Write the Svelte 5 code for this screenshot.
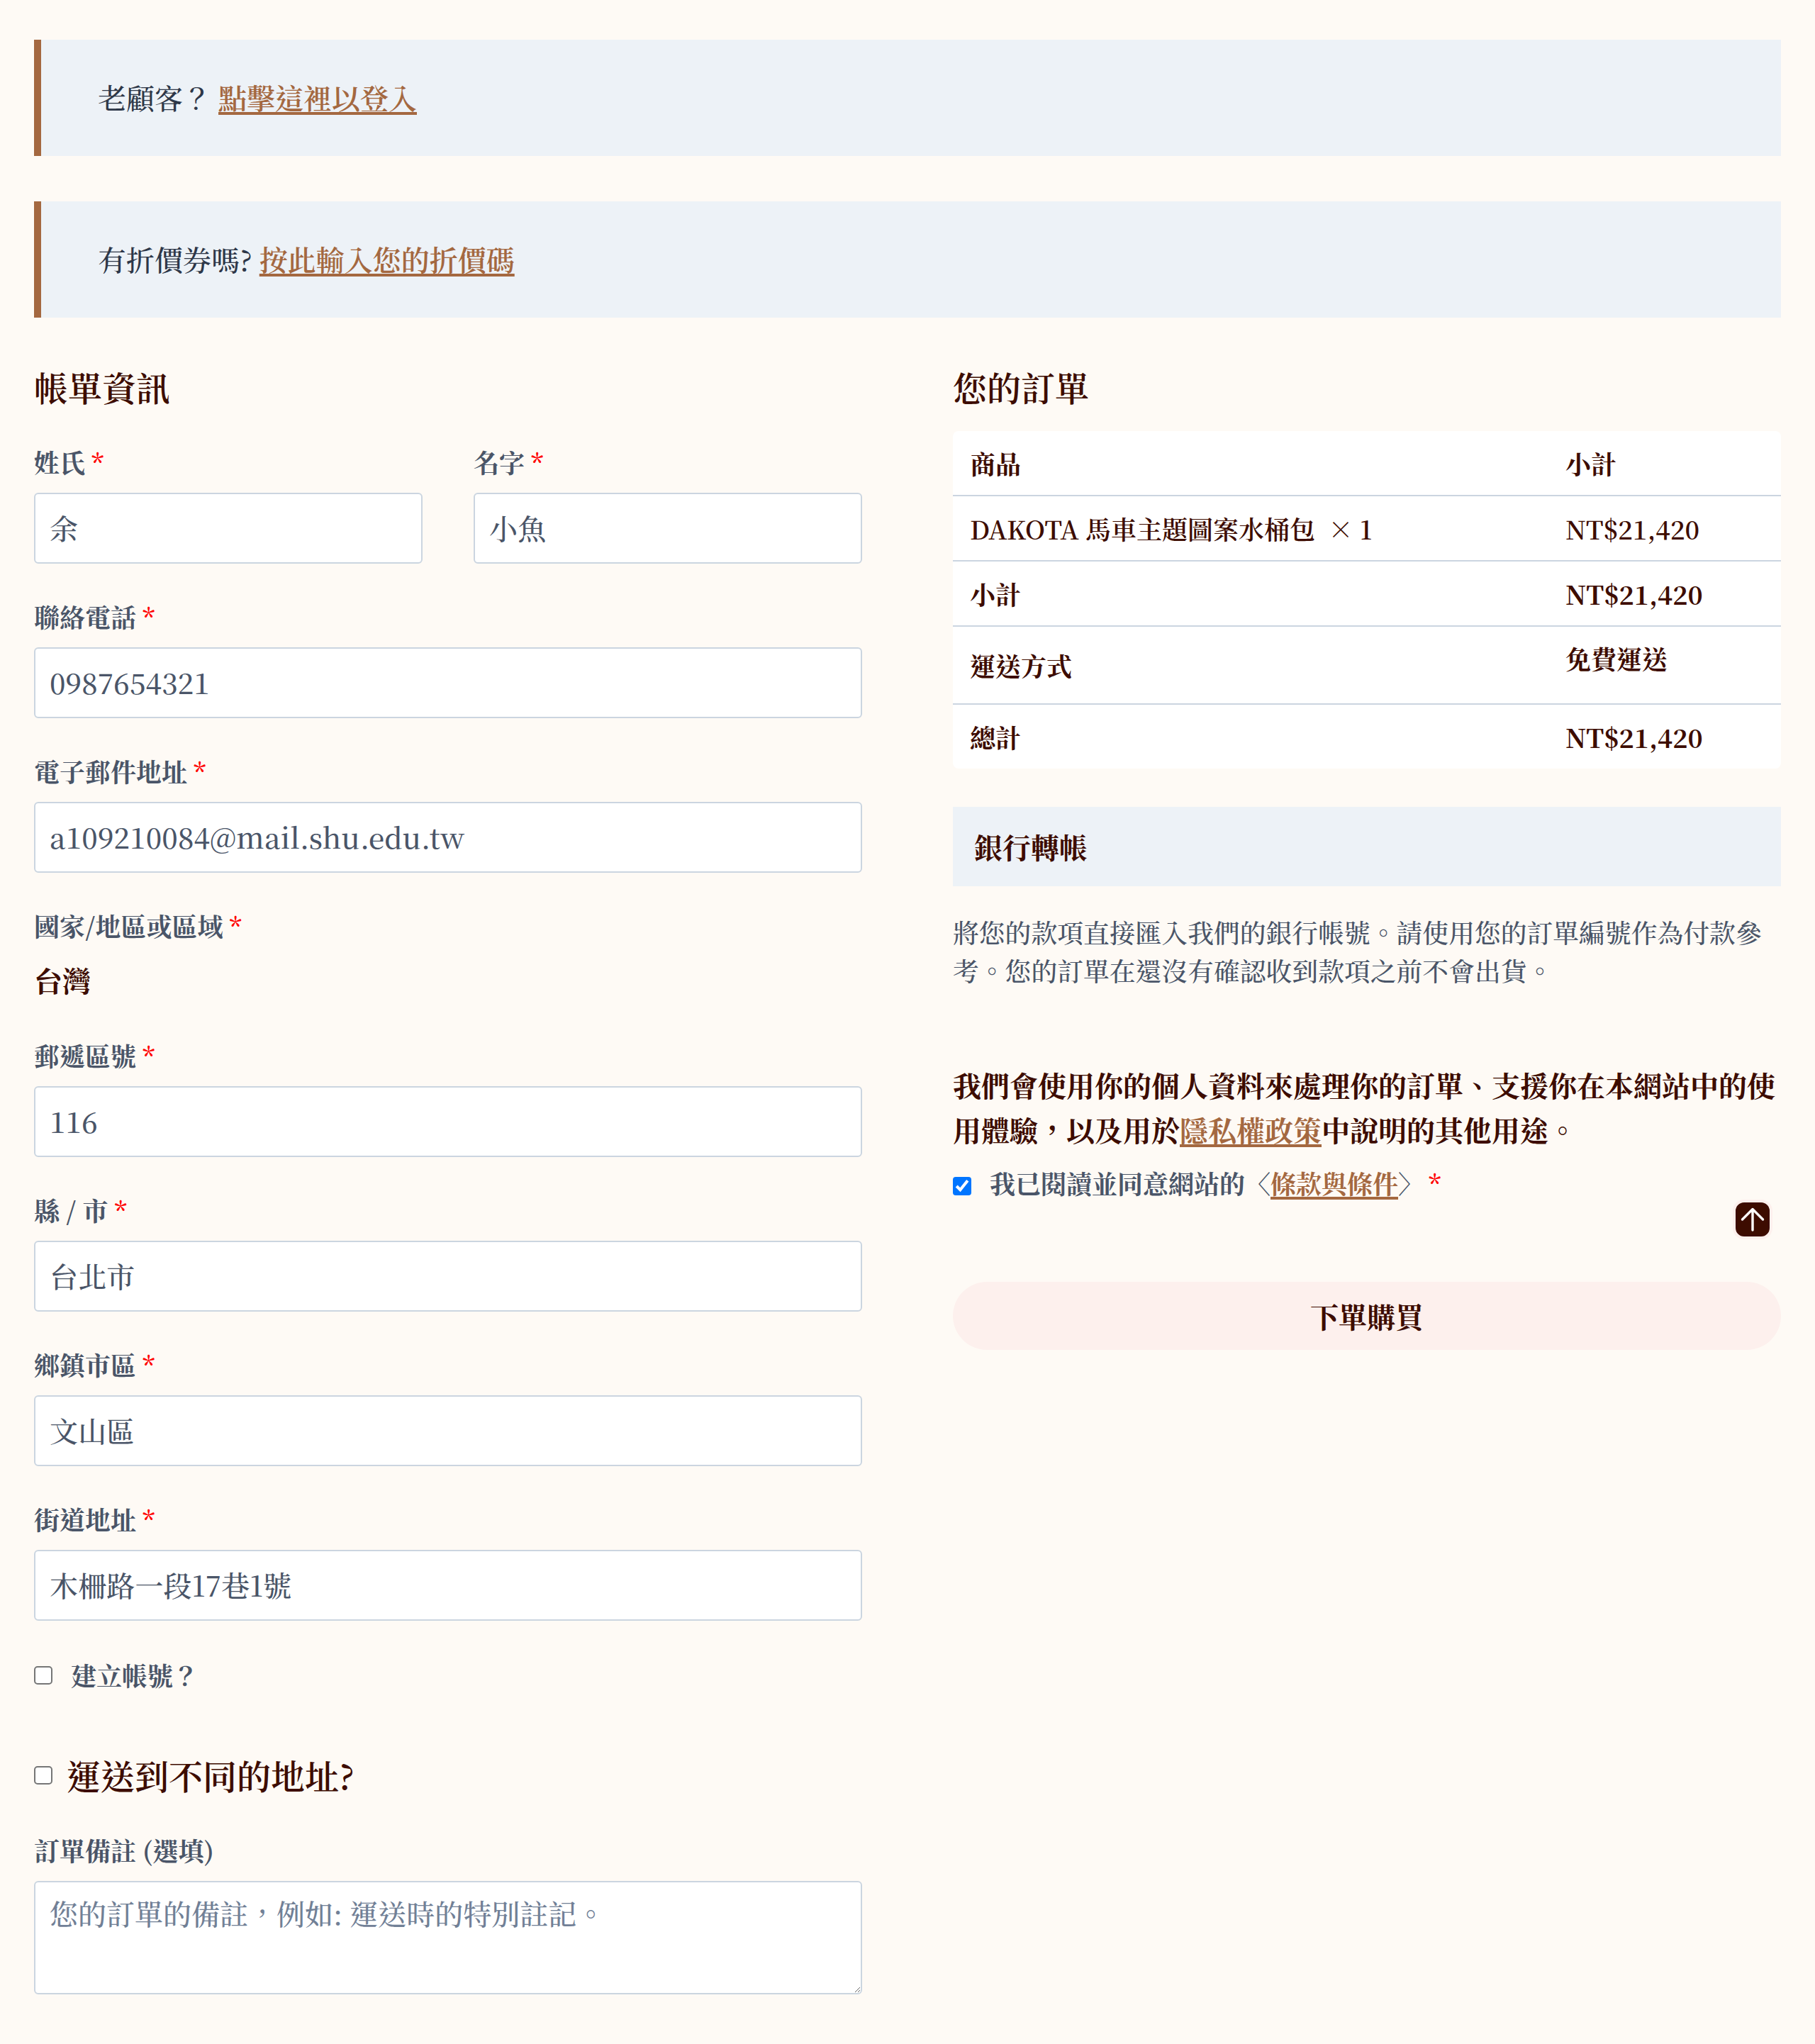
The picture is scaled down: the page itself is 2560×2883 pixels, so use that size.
<script>
    const fields = [
        {label: "聯絡電話", value: "0987654321"},
        {label: "電子郵件地址", value: "a109210084@mail.shu.edu.tw"},
    ];
    const addressFields = [
        {label: "郵遞區號", value: "116"},
        {label: "縣 / 市", value: "台北市"},
        {label: "鄉鎮市區", value: "文山區"},
        {label: "街道地址", value: "木柵路一段17巷1號"},
    ];
</script>

<div class="page">
    <div class="notice">老顧客？ <a href="#login">點擊這裡以登入</a></div>
    <div class="notice">有折價券嗎? <a href="#coupon">按此輸入您的折價碼</a></div>

    <div class="columns">
        <section class="billing">
            <h3>帳單資訊</h3>
            <div class="name-row">
                <div class="field">
                    <label for="last">姓氏 <abbr>*</abbr></label>
                    <input id="last" value="余" />
                </div>
                <div class="field">
                    <label for="first">名字 <abbr>*</abbr></label>
                    <input id="first" value="小魚" />
                </div>
            </div>
            {#each fields as f}
                <div class="field">
                    <label for={f.label}>{f.label} <abbr>*</abbr></label>
                    <input id={f.label} value={f.value} />
                </div>
            {/each}
            <div class="field country">
                <label for="country">國家/地區或區域 <abbr>*</abbr></label>
                <strong id="country">台灣</strong>
            </div>
            {#each addressFields as f}
                <div class="field">
                    <label for={f.label}>{f.label} <abbr>*</abbr></label>
                    <input id={f.label} value={f.value} />
                </div>
            {/each}
            <label class="check create"><input type="checkbox" /> <span>建立帳號？</span></label>
            <label class="check ship"><input type="checkbox" /> <span>運送到不同的地址?</span></label>
            <div class="field notes">
                <label for="notes">訂單備註 (選填)</label>
                <textarea id="notes" placeholder="您的訂單的備註，例如: 運送時的特別註記。"></textarea>
            </div>
        </section>

        <section class="order">
            <h3>您的訂單</h3>
            <table>
                <thead>
                    <tr><th>商品</th><th>小計</th></tr>
                </thead>
                <tbody>
                    <tr><td>DAKOTA 馬車主題圖案水桶包 &nbsp;× 1</td><td>NT$21,420</td></tr>
                </tbody>
                <tfoot>
                    <tr><th>小計</th><th>NT$21,420</th></tr>
                    <tr class="shipping"><th>運送方式</th><th class="free">免費運送</th></tr>
                    <tr><th>總計</th><th>NT$21,420</th></tr>
                </tfoot>
            </table>

            <div class="bank">銀行轉帳</div>
            <p class="bank-desc">將您的款項直接匯入我們的銀行帳號。請使用您的訂單編號作為付款參考。您的訂單在還沒有確認收到款項之前不會出貨。</p>
            <p class="privacy">我們會使用你的個人資料來處理你的訂單、支援你在本網站中的使用體驗，以及用於<a href="#privacy">隱私權政策</a>中說明的其他用途。</p>
            <label class="check terms">
                <input type="checkbox" checked />
                <span>我已閱讀並同意網站的〈<a href="#terms">條款與條件</a>〉</span>
                <abbr>*</abbr>
            </label>
            <button class="submit">下單購買</button>
        </section>
    </div>

    <button class="to-top" aria-label="回到頂端">
        <svg viewBox="0 0 48 48" width="48" height="48" fill="none" stroke="#fff" stroke-width="3.4" stroke-linecap="round" stroke-linejoin="round">
            <path d="M24 39V9.500M9.500 24 24 9.500 38.500 24" />
        </svg>
    </button>
</div>

<style>
    :global(body) {
        margin: 0;
        background: #fefaf5;
    }

    .page {
        position: relative;
        box-sizing: border-box;
        height: 2883px;
        padding: 56px 48px 0;
        font-family: "Noto Serif CJK TC", "Liberation Serif", "Noto Sans CJK TC", serif;
        font-weight: 500;
        color: #3d0c00;
    }

    a {
        color: #a46840;
        text-decoration: underline 4px;
        text-decoration-skip-ink: none;
        text-underline-offset: 4px;
        font-weight: 600;
    }

    .notice {
        box-sizing: border-box;
        height: 164px;
        margin-bottom: 64px;
        padding-left: 80px;
        padding-bottom: 3px;
        display: flex;
        align-items: center;
        gap: 10px;
        font-size: 40px;
        color: #2d3748;
        background: #edf2f7;
        border-left: 10px solid #a46840;
    }

    .columns {
        display: grid;
        grid-template-columns: 1168px 1168px;
        column-gap: 128px;
        margin-top: -2px;
    }

    h3 {
        margin: 0;
        font-size: 48px;
        line-height: 72px;
        font-weight: 600;
    }

    .billing h3 {
        margin-bottom: 43px;
    }

    .order h3 {
        margin-bottom: 26px;
    }

    .name-row {
        display: grid;
        grid-template-columns: 548px 548px;
        column-gap: 72px;
    }

    .field {
        margin-bottom: 48px;
    }

    .field label {
        display: block;
        height: 54px;
        margin-bottom: 16px;
        font-size: 36px;
        line-height: 54px;
        font-weight: 700;
        color: #4a5568;
    }

    abbr {
        color: red;
        font-weight: 600;
    }

    input:not([type="checkbox"]), textarea {
        display: block;
        box-sizing: border-box;
        width: 100%;
        height: 100px;
        padding: 0 20px 3px;
        font: inherit;
        font-size: 40px;
        letter-spacing: 0.15px;
        color: #4a5568;
        background: #fff;
        border: 2px solid #cbd5e0;
        border-radius: 6px;
    }

    textarea {
        height: 160px;
        padding-top: 14px;
        letter-spacing: 0;
    }

    textarea::placeholder {
        color: #718096;
    }

    .country {
        margin-bottom: 50px;
    }

    .country label {
        margin-bottom: 19px;
    }

    .country strong {
        font-size: 40px;
        line-height: 60px;
        font-weight: 700;
    }

    .check {
        display: flex;
        align-items: center;
        gap: 26px;
        font-size: 36px;
        line-height: 54px;
        font-weight: 700;
        color: #4a5568;
    }

    /* zoom keeps the native box at its 2x look */
    .check input {
        zoom: 2;
        width: 13px;
        height: 13px;
        margin: 0;
        flex: none;
    }

    .create {
        margin-top: 50px;
    }

    .ship {
        margin-top: 78px;
        gap: 20px;
        font-size: 48px;
        line-height: 72px;
        font-weight: 600;
        color: #3d0c00;
    }

    .notes {
        margin-top: 43px;
    }

    table {
        width: 100%;
        table-layout: fixed;
        border-collapse: separate;
        border-spacing: 0;
        background: #fff;
        border-radius: 8px;
        font-size: 36px;
    }

    th, td {
        height: 90px;
        padding: 0 24px;
        text-align: left;
        font-weight: 700;
        border-bottom: 2px solid #cbd5e0;
    }

    td {
        font-weight: 600;
    }

    th:first-child, td:first-child {
        width: 792px;
    }

    tfoot tr:last-child th {
        border-bottom: 0;
    }

    .shipping th {
        height: 108px;
    }

    .shipping .free {
        vertical-align: top;
        padding-top: 19px;
        height: 89px;
    }

    .bank {
        box-sizing: border-box;
        height: 112px;
        margin-top: 54px;
        padding-left: 30px;
        padding-bottom: 2px;
        display: flex;
        align-items: center;
        font-size: 40px;
        font-weight: 700;
        background: #edf2f7;
    }

    .bank-desc {
        margin: 38px 0 0;
        font-size: 36.8px;
        line-height: 54px;
        color: #4a5568;
    }

    .privacy {
        margin: 102px 0 0;
        font-size: 40px;
        line-height: 63px;
        font-weight: 700;
    }

    .privacy a, .terms a {
        font-weight: 700;
    }

    .terms {
        margin-top: 18px;
        align-items: flex-start;
    }

    .terms input {
        margin-top: 9px;
    }

    .terms abbr {
        margin-left: -19px;
    }

    .submit {
        display: block;
        width: 100%;
        height: 96px;
        margin-top: 112px;
        padding-bottom: 2px;
        border: 0;
        border-radius: 48px;
        background: #fdf0ed;
        color: #3d0c00;
        font: inherit;
        font-size: 40px;
        font-weight: 700;
    }

    .to-top {
        position: absolute;
        left: 2444px;
        top: 1692px;
        width: 56px;
        height: 56px;
        padding: 0;
        display: flex;
        align-items: center;
        justify-content: center;
        background: #3d0c00;
        border: 4px solid #fdf0ed;
        border-radius: 16px;
    }
</style>
